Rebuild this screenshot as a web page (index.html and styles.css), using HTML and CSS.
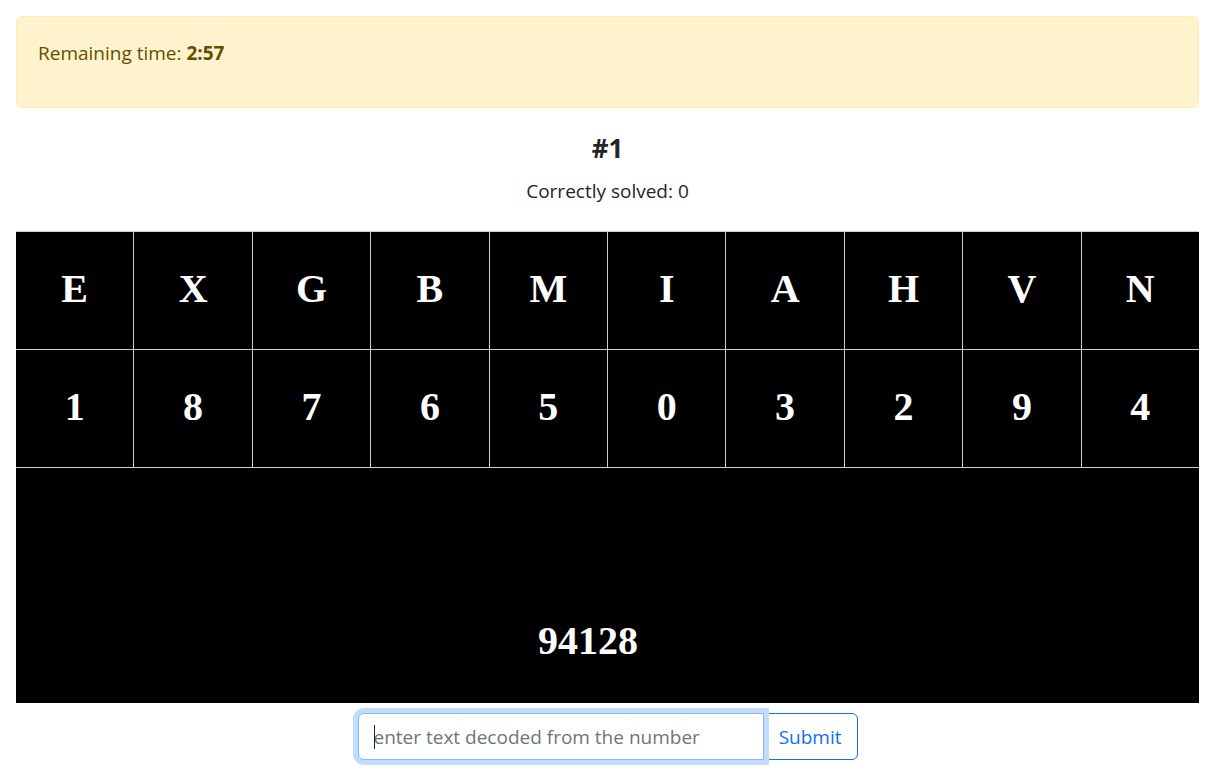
FILE: index.html
```html
<!DOCTYPE html>
<html lang="en">
<head>
<meta charset="utf-8">
<title>Decode</title>
<link rel="stylesheet" href="styles.css">
</head>
<body>
<div class="page">
  <div class="alert">
    <p class="alert-text">Remaining time: <strong>2:57</strong></p>
  </div>
  <h4 class="round">#1</h4>
  <p class="score">Correctly solved: 0</p>
  <div class="board">
    <div class="row">
      <div class="cell">E</div><div class="cell">X</div><div class="cell">G</div><div class="cell">B</div><div class="cell">M</div><div class="cell">I</div><div class="cell">A</div><div class="cell">H</div><div class="cell">V</div><div class="cell">N</div>
    </div>
    <div class="row">
      <div class="cell">1</div><div class="cell">8</div><div class="cell">7</div><div class="cell">6</div><div class="cell">5</div><div class="cell">0</div><div class="cell">3</div><div class="cell">2</div><div class="cell">9</div><div class="cell">4</div>
    </div>
    <div class="number">94128</div>
  </div>
  <form class="input-group" onsubmit="return false">
    <input class="form-control" type="text" placeholder="enter text decoded from the number" autofocus>
    <span class="caret"></span>
    <button class="btn" type="submit">Submit</button>
  </form>
</div>
</body>
</html>
```

FILE: styles.css
```css
html, body {
  margin: 0;
  padding: 0;
  background: #fff;
}

body {
  font-family: "Open Sans", "Noto Sans", sans-serif;
  font-size: 19px;
  color: #212529;
}

.page {
  padding: 16px 12px 16px 16px;
  display: flex;
  flex-direction: column;
}

.alert {
  background: #fff3cd;
  border: 1px solid #ffecb5;
  border-radius: 6px;
  color: #664d03;
  padding: 21px 20px 20px 21px;
  box-sizing: border-box;
  height: 92px;
}

.alert-text {
  margin: 0;
  line-height: 30px;
}

.alert-text strong {
  font-weight: 700;
}

.round {
  margin: 22px 0 0;
  font-size: 26px;
  line-height: 36px;
  font-weight: 700;
  text-align: center;
}

.score {
  margin: 10px 0 0;
  line-height: 30px;
  text-align: center;
}

.board {
  margin-top: 25px;
  background: #000;
  border-top: 1px solid #cfcfcf;
  display: flex;
  flex-direction: column;
  font-family: "Liberation Serif", "Times New Roman", serif;
  font-weight: 700;
  font-size: 40px;
  color: #fff;
}

.row {
  display: grid;
  grid-template-columns: repeat(10, 1fr);
  column-gap: 1px;
  background: #cfcfcf;
  border-bottom: 1px solid #cfcfcf;
}

.cell {
  background: #000;
  height: 117px;
  display: flex;
  align-items: center;
  justify-content: center;
  padding-bottom: 5px;
  box-sizing: border-box;
}

.number {
  height: 235px;
  box-sizing: border-box;
  padding-top: 148px;
  padding-right: 39px;
  line-height: 50px;
  text-align: center;
}

.input-group {
  margin: 10px auto 0;
  width: 500px;
  display: flex;
  position: relative;
}

.form-control {
  flex: 1;
  min-width: 0;
  height: 47px;
  box-sizing: border-box;
  padding: 0 15px;
  font-family: "Open Sans", "Noto Sans", sans-serif;
  font-size: 19px;
  color: #212529;
  caret-color: transparent;
  background: #fff;
  border: 1px solid #86b7fe;
  border-radius: 6px 0 0 6px;
  box-shadow: 0 0 0 5px #c2dbfe;
  outline: none;
  position: relative;
  z-index: 2;
}

.form-control::placeholder {
  color: #6c757d;
}

.caret {
  position: absolute;
  left: 16px;
  top: 12px;
  width: 1px;
  height: 24px;
  background: #212529;
  z-index: 3;
}

.btn {
  height: 47px;
  margin-left: -1px;
  padding: 0 15px;
  font-family: "Open Sans", "Noto Sans", sans-serif;
  font-size: 19px;
  color: #0d6efd;
  background: #fff;
  border: 1px solid #0d6efd;
  border-radius: 0 6px 6px 0;
  cursor: pointer;
}
```
